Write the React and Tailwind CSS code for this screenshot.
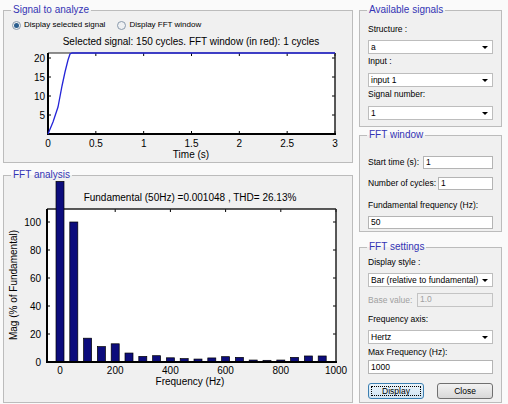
const BARS = [129, 100, 17, 11, 13, 6.4, 4, 4.5, 3, 2.4, 2.1, 2.9, 3.8, 3.3, 1.4, 1.2, 1.4, 3.3, 4.3, 4.3]

function SignalPlot() {
  const x0 = 44, x1 = 331, y0 = 19, y1 = 100
  const xt = t => x0 + (t * (x1 - x0)) / 3
  const yv = v => y1 - v * 3.8
  const curve = '44,100 49,88 54,73 58,52 61,38 64,26 66,20 68,19 331,19'
  return (
    <svg width="348" height="128" className="block overflow-visible">
      <text x="187" y="11" textAnchor="middle" fontSize="10" fill="#000">
        Selected signal: 150 cycles. FFT window (in red): 1 cycles
      </text>
      <rect x={x0} y={y0} width={x1 - x0} height={y1 - y0} fill="#fff" />
      {[0, 0.5, 1, 1.5, 2, 2.5, 3].map(t => (
        <g key={t}>
          <line x1={xt(t)} x2={xt(t)} y1={y1} y2={y1 - 3} stroke="#000" />
          <line x1={xt(t)} x2={xt(t)} y1={y0} y2={y0 + 3} stroke="#000" />
          <text x={xt(t)} y="113" textAnchor="middle" fontSize="10">{t}</text>
        </g>
      ))}
      {[5, 10, 15, 20].map(v => (
        <g key={v}>
          <line x1={x0} x2={x0 + 3} y1={yv(v)} y2={yv(v)} stroke="#000" />
          <line x1={x1} x2={x1 - 3} y1={yv(v)} y2={yv(v)} stroke="#000" />
          <text x="41" y={yv(v) + 3.5} textAnchor="end" fontSize="10">{v}</text>
        </g>
      ))}
      <line x1={x1} x2={x1} y1={y0} y2={y1} stroke="#222" strokeWidth="1.5" />
      <line x1={x0} x2={x1} y1={y0} y2={y0} stroke="#222" strokeWidth="1" />
      <line x1={x0} x2={x0} y1={y0} y2={y1 + 1} stroke="#000" strokeWidth="2" />
      <line x1={x0 - 1} x2={x1 + 1} y1={y1} y2={y1} stroke="#000" strokeWidth="2" />
      <polyline points={curve} fill="none" stroke="#2424d8" strokeWidth="1.3" />
      <text x="187" y="123.5" textAnchor="middle" fontSize="10">Time (s)</text>
    </svg>
  )
}

function FftPlot() {
  const x0 = 43, x1 = 332, y0 = 28, y1 = 181
  const xf = f => 56 + f * 0.276
  const yv = v => y1 - v * 1.4
  return (
    <svg width="348" height="221" className="block overflow-visible">
      <text x="186" y="19.5" textAnchor="middle" fontSize="10">
        Fundamental (50Hz) =0.001048 , THD= 26.13%
      </text>
      <rect x={x0} y={y0} width={x1 - x0} height={y1 - y0} fill="#fff" />
      {[0, 200, 400, 600, 800, 1000].map(f => (
        <g key={f}>
          <line x1={xf(f)} x2={xf(f)} y1={y0} y2={y0 + 3} stroke="#000" />
          <text x={xf(f)} y="193" textAnchor="middle" fontSize="10">{f}</text>
        </g>
      ))}
      {[0, 20, 40, 60, 80, 100].map(v => (
        <g key={v}>
          <line x1={x0} x2={x0 + 3} y1={yv(v)} y2={yv(v)} stroke="#000" />
          <line x1={x1} x2={x1 - 3} y1={yv(v)} y2={yv(v)} stroke="#000" />
          <text x="37" y={yv(v) + 3.5} textAnchor="end" fontSize="10">{v}</text>
        </g>
      ))}
      <line x1={x1} x2={x1} y1={y0} y2={y1} stroke="#222" strokeWidth="1.5" />
      <line x1={x0} x2={x1} y1={y0} y2={y0} stroke="#222" strokeWidth="1.5" />
      <line x1={x0} x2={x0} y1={y0} y2={y1 + 1} stroke="#000" strokeWidth="2" />
      {BARS.map((v, i) => (
        <rect
          key={i}
          x={xf(i * 50) - 4}
          y={yv(v)}
          width="8"
          height={v * 1.4}
          fill="#0c0c7c"
          stroke="#000"
          strokeWidth="0.7"
        />
      ))}
      <line x1={x0 - 1} x2={x1 + 1} y1={y1} y2={y1} stroke="#000" strokeWidth="2" />
      <text
        x="13"
        y="104"
        textAnchor="middle"
        fontSize="10"
        transform="rotate(-90 13 104)"
      >
        Mag (% of Fundamental)
      </text>
      <text x="186" y="204" textAnchor="middle" fontSize="10">Frequency (Hz)</text>
    </svg>
  )
}

function Legend({ children, className = 'ml-[7px]' }) {
  return (
    <legend className={`px-[2px] h-[12px] leading-[12px] text-[10px] text-[#3434b4] ${className}`}>
      {children}
    </legend>
  )
}

function Select({ value, className = '' }) {
  return (
    <div className={`h-[14px] flex items-center bg-white border border-[#bdbdbd] pl-[2px] pr-[4px] ${className}`}>
      <span className="flex-1 leading-[12px]">{value}</span>
      <span className="w-0 h-0 border-l-[3px] border-r-[3px] border-t-[3px] border-l-transparent border-r-transparent border-t-black" />
    </div>
  )
}

function Field({ value, className = '', disabled }) {
  return (
    <div
      className={`h-[13px] leading-[11px] pl-[2px] border ${
        disabled ? 'bg-[#f0f0f0] border-[#c4c4c4] text-[#a0a0a0]' : 'bg-white border-[#b4b4b4]'
      } ${className}`}
    >
      {value}
    </div>
  )
}

function Radio({ checked, label }) {
  return (
    <div className="flex items-center gap-[3px]">
      <span className="w-[9px] h-[9px] rounded-full border border-[#8a9aac] bg-[#eef0f2] flex items-center justify-center">
        {checked && <span className="w-[5px] h-[5px] rounded-full bg-[#2b5e8e]" />}
      </span>
      <span>{label}</span>
    </div>
  )
}

export default function App() {
  return (
    <div className="w-[508px] h-[404px] overflow-hidden bg-[#fafafa] pt-[4px] pl-[3px] flex gap-[6px] font-['Liberation_Sans',Arial,sans-serif] text-[8.5px] text-black">
      <div className="w-[350px] flex flex-col">
        <fieldset className="border border-[#bcbcbc] bg-[#f0f0f0]">
          <Legend>Signal to analyze</Legend>
          <div className="h-[18px] pl-[8px] flex items-center gap-[12px] text-[8px]">
            <Radio checked label="Display selected signal" />
            <Radio label="Display FFT window" />
          </div>
          <SignalPlot />
        </fieldset>
        <fieldset className="mt-[6px] border border-[#bcbcbc] bg-[#f0f0f0]">
          <Legend>FFT analysis</Legend>
          <FftPlot />
        </fieldset>
      </div>

      <div className="w-[143px] flex flex-col">
        <fieldset className="border border-[#bcbcbc] bg-[#f0f0f0] px-[8px] pb-[6px]">
          <Legend className="-ml-px">Available signals</Legend>
          <div className="mt-[8px] h-[11px] leading-[11px]">Structure :</div>
          <Select value="a" className="mt-[5px]" />
          <div className="mt-[2px] h-[11px] leading-[11px]">Input :</div>
          <Select value="input 1" className="mt-[6px]" />
          <div className="mt-[2px] h-[11px] leading-[11px]">Signal number:</div>
          <Select value="1" className="mt-[6px]" />
        </fieldset>

        <fieldset className="mt-[2px] border border-[#bcbcbc] bg-[#f0f0f0] px-[8px] pb-[2px]">
          <Legend className="-ml-px">FFT window</Legend>
          <div className="mt-[15px] h-[13px] flex items-center">
            <span>Start time (s):</span>
            <Field value="1" className="ml-auto w-[70px]" />
          </div>
          <div className="mt-[8px] h-[13px] flex items-center">
            <span>Number of cycles:</span>
            <Field value="1" className="ml-auto w-[55px]" />
          </div>
          <div className="mt-[10px] h-[11px] leading-[11px]">Fundamental frequency (Hz):</div>
          <Field value="50" className="mt-[5px]" />
        </fieldset>

        <fieldset className="mt-[9px] border border-[#bcbcbc] bg-[#f0f0f0] px-[8px] pb-[3px]">
          <Legend className="-ml-px">FFT settings</Legend>
          <div className="mt-[4px] h-[11px] leading-[11px]">Display style :</div>
          <Select value="Bar (relative to fundamental)" className="mt-[5px]" />
          <div className="mt-[6px] h-[14px] flex items-center">
            <span className="text-[#a0a0a0]">Base value:</span>
            <Field value="1.0" disabled className="ml-auto w-[76px] h-[14px]" />
          </div>
          <div className="mt-[7px] h-[11px] leading-[11px]">Frequency axis:</div>
          <Select value="Hertz" className="mt-[5px]" />
          <div className="mt-[3px] h-[11px] leading-[11px]">Max Frequency (Hz):</div>
          <Field value="1000" className="mt-[2px] h-[14px] leading-[12px]" />
          <div className="mt-[9px] h-[16px] flex justify-between">
            <button className="w-[56px] h-[16px] rounded-[3px] border border-[#3c7fb1] bg-gradient-to-b from-[#eaf4fb] to-[#cfe4f3] p-[2px]">
              <span className="h-full flex items-center justify-center border border-dotted border-black leading-none">
                Display
              </span>
            </button>
            <button className="w-[56px] h-[16px] rounded-[3px] border border-[#707070] bg-gradient-to-b from-[#f2f2f2] to-[#d8d8d8] leading-none">
              Close
            </button>
          </div>
        </fieldset>
      </div>
    </div>
  )
}
